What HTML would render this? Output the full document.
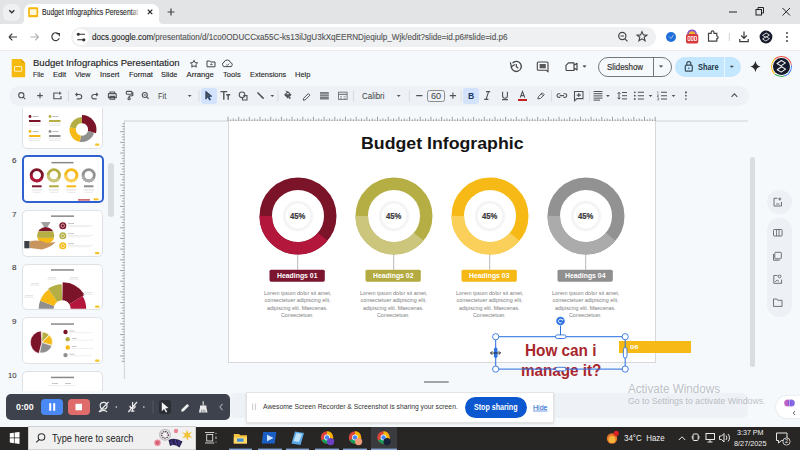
<!DOCTYPE html>
<html><head><meta charset="utf-8">
<style>
*{margin:0;padding:0;box-sizing:border-box}
html,body{width:800px;height:450px;overflow:hidden;background:#f6f9fc;font-family:"Liberation Sans",sans-serif;position:relative}
.a{position:absolute}
svg{position:absolute;overflow:visible}
.t{position:absolute;white-space:pre;line-height:1;transform-origin:0 0}
</style></head><body>

<div class="a" style="left:0;top:0;width:800px;height:24px;background:#e3e4e6"></div>
<div class="a" style="left:3px;top:3.5px;width:17px;height:17px;border-radius:6px;background:#eef0f2"></div>
<div class="a" style="left:24px;top:4px;width:135px;height:21px;background:#fff;border-radius:7px 7px 0 0"></div>
<svg style="left:0;top:0" width="800" height="24">
  <path d="M20 24 Q24 24 24 20 V24 Z" fill="#fff"/>
  <path d="M163 24 Q159 24 159 20 V24 Z" fill="#fff"/>
  <path d="M9.3 10.3 L11.8 12.8 L14.3 10.3" stroke="#333" stroke-width="1.4" fill="none"/>
  <rect x="28.2" y="7.2" width="10" height="10" rx="1.2" fill="#f5b70d"/>
  <rect x="29.9" y="9.3" width="6.6" height="5.8" rx="0.5" fill="#fff8dc"/>
  <path d="M147.8 9.7 L152.3 14.2 M152.3 9.7 L147.8 14.2" stroke="#222" stroke-width="1.2"/>
  <path d="M171 8.6 V15.4 M167.6 12 H174.4" stroke="#444" stroke-width="1.2"/>
  <path d="M729 12 H737" stroke="#222" stroke-width="1"/>
  <rect x="756" y="9.5" width="5.5" height="5.5" stroke="#222" fill="none" stroke-width="1"/>
  <path d="M758 9.5 V7.5 H763.5 V13 H761.5" stroke="#222" fill="none" stroke-width="1"/>
  <path d="M782.5 8 L790 15.5 M790 8 L782.5 15.5" stroke="#222" stroke-width="1"/>
</svg>
<div class="t" style="left:42.20px;top:7.59px;font-size:8.6px;color:#2a2a2a;transform:scale(0.8010,1.0);-webkit-text-stroke:0.12px #2a2a2a;">Budget Infographics Peresentat</div><div class="a" style="left:131px;top:5px;width:10px;height:15px;background:linear-gradient(90deg,rgba(255,255,255,0),#fff 90%)"></div>
<div class="a" style="left:0;top:24px;width:800px;height:26px;background:#fff"></div>
<div class="a" style="left:0;top:49.5px;width:800px;height:0.8px;background:#e9ebee"></div>
<div class="a" style="left:71px;top:27.3px;width:585px;height:19.3px;border-radius:10px;background:#eef0f2"></div>
<div class="a" style="left:73px;top:29.3px;width:15.5px;height:15.5px;border-radius:8px;background:#fff"></div>
<svg style="left:0;top:24px" width="800" height="26">
  <path d="M9 13 H17 M9 13 L12.3 9.7 M9 13 L12.3 16.3" stroke="#3a3a3a" stroke-width="1.15" fill="none"/>
  <path d="M38.5 13 H30.5 M38.5 13 L35.2 9.7 M38.5 13 L35.2 16.3" stroke="#b0b0b0" stroke-width="1.15" fill="none"/>
  <path d="M58.9 10.4 A3.9 3.9 0 1 0 59.3 14.3" stroke="#3a3a3a" stroke-width="1.15" fill="none"/>
  <path d="M56.6 9.6 L59.4 9.6 L59.4 12.2" stroke="#3a3a3a" stroke-width="1.1" fill="none"/>
  <path d="M77.3 10.3 H85 M77.3 15.8 H85" stroke="#333" stroke-width="1.1"/>
  <circle cx="78.3" cy="10.3" r="1.5" fill="#333"/><circle cx="83.8" cy="15.8" r="1.6" fill="#333"/>
  <circle cx="622.3" cy="12" r="3.6" stroke="#444" stroke-width="1.2" fill="none"/>
  <path d="M620.5 12 H624 M625 14.8 L627.5 17.3" stroke="#444" stroke-width="1.2"/>
  <path d="M642 7.6 L643.4 10.9 L646.9 11.1 L644.2 13.3 L645.1 16.8 L642 14.9 L638.9 16.8 L639.8 13.3 L637.1 11.1 L640.6 10.9 Z" stroke="#444" stroke-width="1.1" fill="none"/>
  <circle cx="671" cy="13" r="5" fill="#1e6fd9"/>
  <path d="M669 12.5 L671 14.5 L673.5 11" stroke="#bcd" stroke-width="0.9" fill="none"/>
  <path d="M687 10.5 Q687.5 5.5 692 5.5 Q696.5 5.5 697 10.5 Z" fill="#8a55c8"/>
  <path d="M688.5 10.5 Q689 7.2 692 7.2 Q695 7.2 695.5 10.5 Z" fill="#f0b030"/>
  <rect x="686" y="10" width="12.3" height="9.5" rx="1.8" fill="#d83b3b"/>
  <path d="M688 12.5 H690 V16.5 H688 Z M691.2 12.5 H693.2 V16.5 H691.2 Z M694.4 12.5 H696.4 V16.5 H694.4 Z" fill="none" stroke="#fff" stroke-width="0.8"/>
  <path d="M708.5 9.3 H711.2 V8.2 A1.4 1.4 0 0 1 714 8.2 V9.3 H716.8 V12 A1.3 1.3 0 0 1 716.8 14.6 V17.2 H708.5 Z" stroke="#444" stroke-width="1.2" fill="none"/>
  <path d="M729.3 9 V17" stroke="#d4d4d4" stroke-width="1"/>
  <path d="M744 7.6 V14.2 M741.2 11.5 L744 14.3 L746.8 11.5 M739.8 15 V17.6 H748.2 V15" stroke="#3a3a3a" stroke-width="1.2" fill="none"/>
  <circle cx="766" cy="13" r="6.4" fill="#161c2c"/>
  <path d="M762.6 11.4 L766.2 9 L769.4 11 L765.8 13.4 Z M762.6 15 L766.2 12.6 L769.4 14.6 L765.8 17 Z" stroke="#e8e8e8" stroke-width="0.9" fill="none" stroke-linejoin="round"/>
  <circle cx="787" cy="9" r="0.95" fill="#3a3a3a"/><circle cx="787" cy="13" r="0.95" fill="#3a3a3a"/><circle cx="787" cy="17" r="0.95" fill="#3a3a3a"/>
</svg>
<div class="t" style="left:92.00px;top:33.27px;font-size:8.5px;color:#1f1f1f;transform:scale(0.9539,1.0);-webkit-text-stroke:0.1px #1f1f1f;">docs.google.com</div><div class="t" style="left:153.30px;top:33.27px;font-size:8.5px;color:#555;transform:scale(0.9519,1.0);-webkit-text-stroke:0.12px #555;">/presentation/d/1co0ODUCCxa55C-ks13ilJgU3kXqEERNDjeqiulp_Wjk/edit?slide=id.p6#slide=id.p6</div>
<svg style="left:0;top:50px" width="800" height="36">
  <path d="M11.7 9.8 Q11.7 9 12.5 9 H21.3 L25.2 12.9 V26.4 Q25.2 27.2 24.4 27.2 H12.5 Q11.7 27.2 11.7 26.4 Z" fill="#f6b90d"/>
  <path d="M21.3 9 V12.9 H25.2 Z" fill="#e2a205"/>
  <rect x="14.5" y="16.5" width="7.2" height="4.8" rx="0.6" fill="none" stroke="#fff0b8" stroke-width="1.1"/>
  <path d="M194 10.3 L195.1 12.6 L197.6 12.9 L195.8 14.6 L196.3 17.1 L194 15.9 L191.7 17.1 L192.2 14.6 L190.4 12.9 L192.9 12.6 Z" stroke="#444" stroke-width="1" fill="none"/>
  <path d="M207 11 H209.8 L210.8 12 H215 V16.8 H207 Z" stroke="#444" stroke-width="1" fill="none"/>
  <path d="M210 14.4 H212.2 M211.3 13.4 L212.3 14.4 L211.3 15.4" stroke="#444" stroke-width="0.7" fill="none"/>
  <path d="M224.2 16.6 A2.3 2.3 0 0 1 224 12.2 A3.4 3.4 0 0 1 230.5 12.6 A2.1 2.1 0 0 1 231 16.6 Z" stroke="#444" stroke-width="1" fill="none"/>
  <path d="M226.2 14.6 L227.3 15.6 L229.2 13.6" stroke="#444" stroke-width="0.8" fill="none"/>
</svg>
<div class="t" style="left:32.50px;top:58.09px;font-size:9.9px;color:#1f1f1f;transform:scale(0.9677,1.0);-webkit-text-stroke:0.15px #1f1f1f;">Budget Infographics Peresentation</div><div class="t" style="left:32.90px;top:71.16px;font-size:7.7px;color:#1f1f1f;transform:scale(0.8785,1.0);-webkit-text-stroke:0.12px #1f1f1f;">File</div><div class="t" style="left:53.10px;top:71.16px;font-size:7.7px;color:#1f1f1f;transform:scale(0.9948,1.0);-webkit-text-stroke:0.12px #1f1f1f;">Edit</div><div class="t" style="left:75.30px;top:71.16px;font-size:7.7px;color:#1f1f1f;transform:scale(0.9304,1.0);-webkit-text-stroke:0.12px #1f1f1f;">View</div><div class="t" style="left:99.70px;top:71.16px;font-size:7.7px;color:#1f1f1f;transform:scale(1.0125,1.0);-webkit-text-stroke:0.12px #1f1f1f;">Insert</div><div class="t" style="left:128.60px;top:71.16px;font-size:7.7px;color:#1f1f1f;transform:scale(0.9842,1.0);-webkit-text-stroke:0.12px #1f1f1f;">Format</div><div class="t" style="left:161.00px;top:71.16px;font-size:7.7px;color:#1f1f1f;transform:scale(0.9636,1.0);-webkit-text-stroke:0.12px #1f1f1f;">Slide</div><div class="t" style="left:186.50px;top:71.16px;font-size:7.7px;color:#1f1f1f;-webkit-text-stroke:0.12px #1f1f1f;">Arrange</div><div class="t" style="left:223.00px;top:71.16px;font-size:7.7px;color:#1f1f1f;transform:scale(0.9847,1.0);-webkit-text-stroke:0.12px #1f1f1f;">Tools</div><div class="t" style="left:249.70px;top:71.16px;font-size:7.7px;color:#1f1f1f;transform:scale(0.9637,1.0);-webkit-text-stroke:0.12px #1f1f1f;">Extensions</div><div class="t" style="left:294.80px;top:71.16px;font-size:7.7px;color:#1f1f1f;transform:scale(0.9787,1.0);-webkit-text-stroke:0.12px #1f1f1f;">Help</div>
<div class="a" style="left:598px;top:56.5px;width:73.5px;height:20.5px;border:1px solid #747775;border-radius:11px"></div>
<div class="a" style="left:652.5px;top:57px;width:0.8px;height:19.5px;background:#747775"></div>
<div class="a" style="left:675.2px;top:56.6px;width:65.5px;height:20.6px;background:#c2e7ff;border-radius:11px"></div>
<div class="a" style="left:723.5px;top:57px;width:0.7px;height:19.5px;background:#eaf6ff"></div>
<div class="a" style="left:770.8px;top:56.1px;width:21px;height:21px;border-radius:50%;background:conic-gradient(#ea4335 0 22%,#4285f4 22% 45%,#34a853 45% 62%,#fbbc04 62% 88%,#ea4335 88%)"></div>
<div class="a" style="left:771.9px;top:57.2px;width:18.8px;height:18.8px;border-radius:50%;background:#fff"></div>
<div class="a" style="left:773px;top:58.3px;width:16.6px;height:16.6px;border-radius:50%;background:#121a2c"></div>
<svg style="left:0;top:50px" width="800" height="36">
  <!-- history -->
  <path d="M511.3 16.6 A5 5 0 1 0 512.5 13.2" stroke="#444" stroke-width="1.3" fill="none"/>
  <path d="M510.4 12.3 L511.3 16.8 L514.8 14.5" stroke="#444" stroke-width="1.2" fill="none"/>
  <path d="M516.3 14 V16.8 L518.3 18.2" stroke="#444" stroke-width="1.2" fill="none"/>
  <!-- comment -->
  <path d="M538.3 12 H547 Q548 12 548 13 V21.6 L546.2 20.3 H538.3 Q537.3 20.3 537.3 19.3 V13 Q537.3 12 538.3 12 Z" stroke="#444" stroke-width="1.1" fill="none"/>
  <rect x="539.6" y="14" width="6.2" height="4.3" fill="#5a5a5a"/>
  <!-- camera -->
  <path d="M568.5 12.8 H574 V20.5 H567 Q566 20.5 566 19.5 V15.3 Z M574 15.2 L577 13.3 V20 L574 18.1" stroke="#444" stroke-width="1.15" fill="none" stroke-linejoin="round"/>
  <path d="M583 15.8 L584.5 17.3 L586 15.8 Z" fill="#444" stroke="#444" stroke-width="0.6"/>
  <path d="M659.5 15.8 L661 17.3 L662.5 15.8 Z" fill="#444" stroke="#444" stroke-width="0.6"/>
  <path d="M730.3 16 L731.8 17.5 L733.3 16 Z" fill="#444" stroke="#444" stroke-width="0.6"/>
  <!-- lock -->
  <rect x="685.3" y="15.2" width="7" height="6" rx="1" stroke="#3c4a57" stroke-width="1.2" fill="none"/>
  <path d="M686.8 15.2 V13.6 A2 2 0 0 1 690.8 13.6 V15.2" stroke="#3c4a57" stroke-width="1.2" fill="none"/>
  <circle cx="688.8" cy="18.2" r="0.7" fill="#3c4a57"/>
  <!-- gemini -->
  <path d="M755.4 10.7 Q756.2 15.7 760.6 16.5 Q756.2 17.3 755.4 22.3 Q754.6 17.3 750.2 16.5 Q754.6 15.7 755.4 10.7 Z" fill="#2b2b2b"/>
</svg>
<svg style="left:0;top:50px" width="800" height="36">
  <path d="M777 13.5 L781.4 10.5 L785.4 12.9 L781 15.9 Z M777.2 19.7 L781.6 16.7 L785.6 19.1 L781.2 22.1 Z" stroke="#f0f0f0" stroke-width="1.1" fill="none" stroke-linejoin="round"/>
</svg>
<div class="t" style="left:607.40px;top:62.82px;font-size:8.8px;color:#333;transform:scale(0.9000,1.0);-webkit-text-stroke:0.18px #333;">Slideshow</div><div class="t" style="left:698.00px;top:62.92px;font-size:8.8px;color:#1d3444;font-weight:bold;transform:scale(0.8382,1.0);">Share</div>
<div class="a" style="left:8.5px;top:85.8px;width:740px;height:20px;border-radius:10px;background:#eef1f6"></div>
<div class="a" style="left:201.3px;top:88px;width:16px;height:15.7px;border-radius:3px;background:#d3e3fd"></div>
<div class="a" style="left:463.4px;top:88px;width:15.4px;height:16px;border-radius:3px;background:#d3e3fd"></div>
<div class="a" style="left:426.6px;top:89.6px;width:18.1px;height:12.2px;border:0.8px solid #8a8c8e;border-radius:2.5px"></div>
<svg style="left:0;top:86px" width="800" height="20">
 <g stroke="#505356" fill="none" stroke-width="1.1">
  <!-- search -->
  <circle cx="21.3" cy="9.2" r="2.6" /><path d="M23.2 11.1 L25.2 13.1"/>
  <!-- plus -->
  <path d="M40 6.8 V12.4 M37.2 9.6 H42.8"/>
  <!-- new slide -->
  <path d="M58 7 H53.8 V12.8 H61 V10"/><path d="M59.8 5.6 V8.8 M58.2 7.2 H61.4" stroke-width="1"/>
  <!-- undo redo -->
  <path d="M76 8.5 H79.5 A2.2 2.2 0 0 1 79.5 12.9 H76.8 M77.3 6.8 L75.8 8.5 L77.3 10.1"/>
  <path d="M97.5 8.5 H94 A2.2 2.2 0 0 0 94 12.9 H96.7 M96.2 6.8 L97.7 8.5 L96.2 10.1"/>
  <!-- print -->
  <path d="M110 7.6 V6 H114.6 V7.6 M109 7.6 H115.6 Q116.2 7.6 116.2 8.2 V11.6 H108.4 V8.2 Q108.4 7.6 109 7.6 Z M110 10.4 H114.6 V13.2 H110 Z"/>
  <!-- paint format -->
  <path d="M126.3 6.2 Q126.3 5.4 127.1 5.4 H131.1 Q131.9 5.4 131.9 6.2 V7.4 Q131.9 8.2 131.1 8.2 H127.1 Q126.3 8.2 126.3 7.4 Z M131.9 6.8 H132.8 V9.6 L129.1 10.2 V11.4"/><circle cx="129.1" cy="12.7" r="1.1"/>
  <!-- zoom -->
  <circle cx="144.8" cy="9" r="2.5"/><path d="M143.7 9 H145.9 M146.7 10.9 L148.6 12.8"/>
  <!-- line -->
  <path d="M257.5 6.5 L263.6 12.6" stroke-width="1.6"/>
  <!-- shape -->
  <circle cx="242" cy="8.8" r="2.8"/><path d="M243.3 9.6 H247 V14 H242.5 V11.5"/>
  <!-- fill -->
  <path d="M284.8 8.8 L287.8 5.8 L290.8 8.8 L287.8 11.8 Z M285.2 8.8 H290.4" stroke-width="1.1"/><path d="M285 8.9 L287.8 11.6 L290.6 8.9 Z" fill="#505356" stroke="none"/><path d="M286 4.8 L287.3 6.2" stroke-width="1"/>
  <!-- pen -->
  <path d="M303.6 12.3 L308.3 7.6 L309.9 9.2 L305.2 13.9 L303.3 14.2 Z" stroke-width="1"/>

 </g>
 <g fill="#505356">
  <path d="M187.8 9 L191.6 9 L189.7 11 Z"/>
  <path d="M270.4 9 L274.2 9 L272.3 11 Z"/>
  <path d="M396.8 9 L400.6 9 L398.7 11 Z"/>
  <path d="M606 9 L609.8 9 L607.9 11 Z"/>
  <path d="M648.6 9 L652.4 9 L650.5 11 Z"/>
  <path d="M671.6 9 L675.4 9 L673.5 11 Z"/>
  <circle cx="289.8" cy="12" r="0.9"/>
  <rect x="320" y="6" width="8.8" height="7.5" fill="#7a7c7f"/>
  <path d="M320 8.2 H328.8 M320 10.4 H328.8" stroke="#eef2f8" stroke-width="0.5"/>
  <rect x="338.5" y="6.2" width="8.6" height="7.2" fill="none" stroke="#7a7c7f" stroke-width="1"/>
  <path d="M338.5 8.4 H347.1" stroke="#7a7c7f" stroke-width="1.2"/>
  <path d="M340 10.7 H342 M343.6 10.7 H345.6 M340 12.4 H342 M343.6 12.4 H345.6" stroke="#7a7c7f" stroke-width="0.7"/>
  <path d="M685.9 6.4 V6.4" stroke="#505356" stroke-width="1.6" stroke-linecap="round"/>
  <circle cx="685.9" cy="6.4" r="0.85"/><circle cx="685.9" cy="9.7" r="0.85"/><circle cx="685.9" cy="13" r="0.85"/>
 </g>
 <g stroke="#d8dce2" stroke-width="1"><path d="M68.5 4.5 V15.5 M198.9 4.5 V15.5 M277.9 4.5 V15.5 M353.5 4.5 V15.5 M409.4 4.5 V15.5 M461 4.5 V15.5 M551.6 4.5 V15.5 M589.7 4.5 V15.5"/></g>
 <g stroke="#505356" fill="none" stroke-width="1.1">
  <!-- cursor -->
  <path d="M205.8 5.3 L211.8 10.2 L208.8 10.6 L210.6 13.6 L209.6 14.1 L207.8 11.1 L205.8 13.2 Z" fill="#505356" stroke-width="0.8" stroke="#1e3a6b"/>
  <!-- Tt -->
  <path d="M220.5 5.6 H227.2 M223.8 5.6 V13.8 M226.2 8.8 H230.2 M228.2 8.8 V13.8" stroke-width="1.4"/>
  <!-- minus plus -->
  <path d="M416.2 9.6 H422.4 M449.8 9.6 H456 M452.9 6.5 V12.7"/>
  <!-- I -->
  <path d="M486 5.6 H490.2 M484.2 13.4 H488.4 M488.6 5.6 L486.1 13.4" stroke-width="1.1"/>
  <!-- U -->
  <path d="M502.6 5.8 V9.8 A2.4 2.4 0 0 0 507.4 9.8 V5.8 M502 13.6 H508" stroke-width="1.1"/>
  <!-- A -->
  <path d="M520.2 11.6 L522.5 5.6 L524.8 11.6 M521 9.6 H524" stroke-width="1.1"/>
  <!-- highlighter -->
  <path d="M537.8 12.8 L538.5 10.6 L542.3 6.8 L544.2 8.7 L540.4 12.5 Z M541.3 7.8 L543.2 9.7" stroke-width="1"/>
  <!-- link -->
  <path d="M560.3 7.8 H558.8 A1.8 1.8 0 0 0 558.8 11.4 H560.3 M563.5 7.8 H565 A1.8 1.8 0 0 1 565 11.4 H563.5 M559.8 9.6 H564" stroke-width="1.1"/>
  <!-- comment add -->
  <path d="M574.5 5.5 H583 V12.6 H577 L574.5 14.8 Z M578.8 7 V11.1 M576.7 9.1 H580.9" stroke-width="1.1"/>
  <!-- align -->
  <path d="M593.5 5.5 H602.5 M593.5 7.7 H602.5 M593.5 9.9 H602.5 M593.5 12.1 H602.5 M593.5 14.1 H600" stroke-width="1"/>
  <!-- line spacing -->
  <path d="M619 6.5 V13 M617.5 7.8 L619 6.3 L620.5 7.8 M617.5 11.7 L619 13.2 L620.5 11.7 M622 6.5 H627 M622 9.7 H627 M622 12.9 H627" stroke-width="1"/>
  <!-- bullet -->
  <path d="M637.8 6.3 H644 M637.8 9.7 H644 M637.8 13 H644" stroke-width="1.1"/>
  <!-- numbered -->
  <path d="M661 6.3 H667 M661 9.7 H667 M661 13 H667" stroke-width="1.1"/>
  <!-- chevron up -->
  <path d="M731.5 10.8 L734.4 7.9 L737.3 10.8" stroke-width="1.1"/>
 </g>
 <g fill="#505356"><circle cx="634.8" cy="6.3" r="0.9"/><circle cx="634.8" cy="9.7" r="0.9"/><circle cx="634.8" cy="13" r="0.9"/>
 <path d="M657.8 5.3 V7.4 M657.2 8.8 H658.7 L657.2 10.5 H658.8 M657.3 12 H658.7 V14 H657.3" stroke="#505356" stroke-width="0.6" fill="none"/></g>
</svg>
<div class="t" style="left:158.00px;top:92.16px;font-size:8.4px;color:#444;transform:scale(0.9001,1.0);">Fit</div><div class="t" style="left:362.00px;top:92.42px;font-size:8.8px;color:#3c3c3c;transform:scale(0.9022,1.0);">Calibri</div><div class="t" style="left:430.60px;top:92.29px;font-size:8.6px;color:#444;transform:scale(1.0663,1.0);">60</div><div class="t" style="left:468.00px;top:92.15px;font-size:9.0px;color:#1f3a64;font-weight:bold;transform:scale(0.9539,1.0);">B</div><div class="a" style="left:518px;top:99.2px;width:9px;height:1.7px;background:#c5221f"></div>
<svg style="left:0;top:0" width="800" height="450">
 <path d="M124 121 H748 M124.4 121 V379" stroke="#c8cacd" stroke-width="0.8" fill="none"/>
 <path d="M228.00 121 V116.80 M230.67 121 V119.30 M233.34 121 V118.40 M236.01 121 V119.30 M238.68 121 V116.80 M241.35 121 V119.30 M244.02 121 V118.40 M246.69 121 V119.30 M249.36 121 V116.80 M252.03 121 V119.30 M254.70 121 V118.40 M257.37 121 V119.30 M260.04 121 V116.80 M262.71 121 V119.30 M265.38 121 V118.40 M268.05 121 V119.30 M270.72 121 V116.80 M273.39 121 V119.30 M276.06 121 V118.40 M278.73 121 V119.30 M281.40 121 V116.80 M284.07 121 V119.30 M286.74 121 V118.40 M289.41 121 V119.30 M292.08 121 V116.80 M294.75 121 V119.30 M297.42 121 V118.40 M300.09 121 V119.30 M302.76 121 V116.80 M305.43 121 V119.30 M308.10 121 V118.40 M310.77 121 V119.30 M313.44 121 V116.80 M316.11 121 V119.30 M318.78 121 V118.40 M321.45 121 V119.30 M324.12 121 V116.80 M326.79 121 V119.30 M329.46 121 V118.40 M332.13 121 V119.30 M334.80 121 V116.80 M337.47 121 V119.30 M340.14 121 V118.40 M342.81 121 V119.30 M345.48 121 V116.80 M348.15 121 V119.30 M350.82 121 V118.40 M353.49 121 V119.30 M356.16 121 V116.80 M358.83 121 V119.30 M361.50 121 V118.40 M364.17 121 V119.30 M366.84 121 V116.80 M369.51 121 V119.30 M372.18 121 V118.40 M374.85 121 V119.30 M377.52 121 V116.80 M380.19 121 V119.30 M382.86 121 V118.40 M385.53 121 V119.30 M388.20 121 V116.80 M390.87 121 V119.30 M393.54 121 V118.40 M396.21 121 V119.30 M398.88 121 V116.80 M401.55 121 V119.30 M404.22 121 V118.40 M406.89 121 V119.30 M409.56 121 V116.80 M412.23 121 V119.30 M414.90 121 V118.40 M417.57 121 V119.30 M420.24 121 V116.80 M422.91 121 V119.30 M425.58 121 V118.40 M428.25 121 V119.30 M430.92 121 V116.80 M433.59 121 V119.30 M436.26 121 V118.40 M438.93 121 V119.30 M441.60 121 V116.80 M444.27 121 V119.30 M446.94 121 V118.40 M449.61 121 V119.30 M452.28 121 V116.80 M454.95 121 V119.30 M457.62 121 V118.40 M460.29 121 V119.30 M462.96 121 V116.80 M465.63 121 V119.30 M468.30 121 V118.40 M470.97 121 V119.30 M473.64 121 V116.80 M476.31 121 V119.30 M478.98 121 V118.40 M481.65 121 V119.30 M484.32 121 V116.80 M486.99 121 V119.30 M489.66 121 V118.40 M492.33 121 V119.30 M495.00 121 V116.80 M497.67 121 V119.30 M500.34 121 V118.40 M503.01 121 V119.30 M505.68 121 V116.80 M508.35 121 V119.30 M511.02 121 V118.40 M513.69 121 V119.30 M516.36 121 V116.80 M519.03 121 V119.30 M521.70 121 V118.40 M524.37 121 V119.30 M527.04 121 V116.80 M529.71 121 V119.30 M532.38 121 V118.40 M535.05 121 V119.30 M537.72 121 V116.80 M540.39 121 V119.30 M543.06 121 V118.40 M545.73 121 V119.30 M548.40 121 V116.80 M551.07 121 V119.30 M553.74 121 V118.40 M556.41 121 V119.30 M559.08 121 V116.80 M561.75 121 V119.30 M564.42 121 V118.40 M567.09 121 V119.30 M569.76 121 V116.80 M572.43 121 V119.30 M575.10 121 V118.40 M577.77 121 V119.30 M580.44 121 V116.80 M583.11 121 V119.30 M585.78 121 V118.40 M588.45 121 V119.30 M591.12 121 V116.80 M593.79 121 V119.30 M596.46 121 V118.40 M599.13 121 V119.30 M601.80 121 V116.80 M604.47 121 V119.30 M607.14 121 V118.40 M609.81 121 V119.30 M612.48 121 V116.80 M615.15 121 V119.30 M617.82 121 V118.40 M620.49 121 V119.30 M623.16 121 V116.80 M625.83 121 V119.30 M628.50 121 V118.40 M631.17 121 V119.30 M633.84 121 V116.80 M636.51 121 V119.30 M639.18 121 V118.40 M641.85 121 V119.30 M644.52 121 V116.80 M647.19 121 V119.30 M649.86 121 V118.40 M652.53 121 V119.30 M655.20 121 V116.80 M124.4 123.67 H122.70 M124.4 126.34 H121.80 M124.4 129.01 H122.70 M124.4 131.68 H120.20 M124.4 134.35 H122.70 M124.4 137.02 H121.80 M124.4 139.69 H122.70 M124.4 142.36 H120.20 M124.4 145.03 H122.70 M124.4 147.70 H121.80 M124.4 150.37 H122.70 M124.4 153.04 H120.20 M124.4 155.71 H122.70 M124.4 158.38 H121.80 M124.4 161.05 H122.70 M124.4 163.72 H120.20 M124.4 166.39 H122.70 M124.4 169.06 H121.80 M124.4 171.73 H122.70 M124.4 174.40 H120.20 M124.4 177.07 H122.70 M124.4 179.74 H121.80 M124.4 182.41 H122.70 M124.4 185.08 H120.20 M124.4 187.75 H122.70 M124.4 190.42 H121.80 M124.4 193.09 H122.70 M124.4 195.76 H120.20 M124.4 198.43 H122.70 M124.4 201.10 H121.80 M124.4 203.77 H122.70 M124.4 206.44 H120.20 M124.4 209.11 H122.70 M124.4 211.78 H121.80 M124.4 214.45 H122.70 M124.4 217.12 H120.20 M124.4 219.79 H122.70 M124.4 222.46 H121.80 M124.4 225.13 H122.70 M124.4 227.80 H120.20 M124.4 230.47 H122.70 M124.4 233.14 H121.80 M124.4 235.81 H122.70 M124.4 238.48 H120.20 M124.4 241.15 H122.70 M124.4 243.82 H121.80 M124.4 246.49 H122.70 M124.4 249.16 H120.20 M124.4 251.83 H122.70 M124.4 254.50 H121.80 M124.4 257.17 H122.70 M124.4 259.84 H120.20 M124.4 262.51 H122.70 M124.4 265.18 H121.80 M124.4 267.85 H122.70 M124.4 270.52 H120.20 M124.4 273.19 H122.70 M124.4 275.86 H121.80 M124.4 278.53 H122.70 M124.4 281.20 H120.20 M124.4 283.87 H122.70 M124.4 286.54 H121.80 M124.4 289.21 H122.70 M124.4 291.88 H120.20 M124.4 294.55 H122.70 M124.4 297.22 H121.80 M124.4 299.89 H122.70 M124.4 302.56 H120.20 M124.4 305.23 H122.70 M124.4 307.90 H121.80 M124.4 310.57 H122.70 M124.4 313.24 H120.20 M124.4 315.91 H122.70 M124.4 318.58 H121.80 M124.4 321.25 H122.70 M124.4 323.92 H120.20 M124.4 326.59 H122.70 M124.4 329.26 H121.80 M124.4 331.93 H122.70 M124.4 334.60 H120.20 M124.4 337.27 H122.70 M124.4 339.94 H121.80 M124.4 342.61 H122.70 M124.4 345.28 H120.20 M124.4 347.95 H122.70 M124.4 350.62 H121.80 M124.4 353.29 H122.70 M124.4 355.96 H120.20 M124.4 358.63 H122.70 M124.4 361.30 H121.80" stroke="#7d7f82" stroke-width="0.75" fill="none"/>
</svg>
<div class="a" style="left:228px;top:121px;width:427.5px;height:241.5px;background:#fff;border:0.8px solid #d6d8db;border-top:none"></div><div class="t" style="left:360.65px;top:134.88px;font-size:17.2px;color:#141414;font-weight:bold;transform:scale(1.0320,1.0);">Budget Infographic</div><svg style="left:0;top:0" width="800" height="450"><defs><radialGradient id="ish"><stop offset="0.62" stop-color="#fff" stop-opacity="0"/><stop offset="0.8" stop-color="#f0f0f0"/><stop offset="1" stop-color="#fff" stop-opacity="0"/></radialGradient></defs><circle cx="298" cy="216" r="32.25" fill="none" stroke="#7b1428" stroke-width="12.5"/>
<circle cx="298" cy="216" r="32.25" fill="none" stroke="#b3173c" stroke-width="12.5" stroke-dasharray="78.80 202.63" transform="rotate(40 298 216)"/>
<circle cx="298" cy="216" r="17" fill="url(#ish)"/>
<path d="M297.7 254.5 V269.7" stroke="#9a9a9a" stroke-width="0.7"/>
<rect x="269.5" y="269.7" width="55.3" height="12" rx="1.6" fill="#7b1530"/>
<circle cx="394" cy="216" r="32.25" fill="none" stroke="#b5ae45" stroke-width="12.5"/>
<circle cx="394" cy="216" r="32.25" fill="none" stroke="#ccc67d" stroke-width="12.5" stroke-dasharray="78.80 202.63" transform="rotate(40 394 216)"/>
<circle cx="394" cy="216" r="17" fill="url(#ish)"/>
<path d="M393.7 254.5 V269.7" stroke="#9a9a9a" stroke-width="0.7"/>
<rect x="365.5" y="269.7" width="55.3" height="12" rx="1.6" fill="#b3ab42"/>
<circle cx="490" cy="216" r="32.25" fill="none" stroke="#f6b915" stroke-width="12.5"/>
<circle cx="490" cy="216" r="32.25" fill="none" stroke="#fbd05a" stroke-width="12.5" stroke-dasharray="78.80 202.63" transform="rotate(40 490 216)"/>
<circle cx="490" cy="216" r="17" fill="url(#ish)"/>
<path d="M489.7 254.5 V269.7" stroke="#9a9a9a" stroke-width="0.7"/>
<rect x="461.5" y="269.7" width="55.3" height="12" rx="1.6" fill="#f5b815"/>
<circle cx="586" cy="216" r="32.25" fill="none" stroke="#929292" stroke-width="12.5"/>
<circle cx="586" cy="216" r="32.25" fill="none" stroke="#ababab" stroke-width="12.5" stroke-dasharray="78.80 202.63" transform="rotate(40 586 216)"/>
<circle cx="586" cy="216" r="17" fill="url(#ish)"/>
<path d="M585.7 254.5 V269.7" stroke="#9a9a9a" stroke-width="0.7"/>
<rect x="557.5" y="269.7" width="55.3" height="12" rx="1.6" fill="#8f8f8f"/></svg><div class="t" style="left:290.35px;top:212.25px;font-size:8.3px;color:#3a3a3a;font-weight:bold;transform:scale(0.9210,1.0);-webkit-text-stroke:0.2px #3a3a3a;">45%</div><div class="t" style="left:277.25px;top:272.59px;font-size:6.6px;color:#ffffff;font-weight:bold;transform:scale(1.0416,1.0);">Headings 01</div><div class="t" style="left:263.95px;top:291.01px;font-size:5.4px;color:#808080;transform:scale(1.0131,1.0);">Lorem ipsum dolor sit amet,</div><div class="t" style="left:264.45px;top:298.41px;font-size:5.4px;color:#808080;">consectetuer adipiscing elit,</div><div class="t" style="left:267.35px;top:305.81px;font-size:5.4px;color:#808080;transform:scale(0.9817,1.0);">adipiscing elit. Maecenas.</div><div class="t" style="left:281.40px;top:313.01px;font-size:5.4px;color:#808080;transform:scale(0.9784,1.0);">Consectetuer.</div><div class="t" style="left:386.35px;top:212.25px;font-size:8.3px;color:#3a3a3a;font-weight:bold;transform:scale(0.9210,1.0);-webkit-text-stroke:0.2px #3a3a3a;">45%</div><div class="t" style="left:373.25px;top:272.59px;font-size:6.6px;color:#ffffff;font-weight:bold;transform:scale(1.0416,1.0);">Headings 02</div><div class="t" style="left:359.95px;top:291.01px;font-size:5.4px;color:#808080;transform:scale(1.0131,1.0);">Lorem ipsum dolor sit amet,</div><div class="t" style="left:360.45px;top:298.41px;font-size:5.4px;color:#808080;">consectetuer adipiscing elit,</div><div class="t" style="left:363.35px;top:305.81px;font-size:5.4px;color:#808080;transform:scale(0.9817,1.0);">adipiscing elit. Maecenas.</div><div class="t" style="left:377.40px;top:313.01px;font-size:5.4px;color:#808080;transform:scale(0.9784,1.0);">Consectetuer.</div><div class="t" style="left:482.35px;top:212.25px;font-size:8.3px;color:#3a3a3a;font-weight:bold;transform:scale(0.9210,1.0);-webkit-text-stroke:0.2px #3a3a3a;">45%</div><div class="t" style="left:469.25px;top:272.59px;font-size:6.6px;color:#ffffff;font-weight:bold;transform:scale(1.0416,1.0);">Headings 03</div><div class="t" style="left:455.95px;top:291.01px;font-size:5.4px;color:#808080;transform:scale(1.0131,1.0);">Lorem ipsum dolor sit amet,</div><div class="t" style="left:456.45px;top:298.41px;font-size:5.4px;color:#808080;">consectetuer adipiscing elit,</div><div class="t" style="left:459.35px;top:305.81px;font-size:5.4px;color:#808080;transform:scale(0.9817,1.0);">adipiscing elit. Maecenas.</div><div class="t" style="left:473.40px;top:313.01px;font-size:5.4px;color:#808080;transform:scale(0.9784,1.0);">Consectetuer.</div><div class="t" style="left:578.35px;top:212.25px;font-size:8.3px;color:#3a3a3a;font-weight:bold;transform:scale(0.9210,1.0);-webkit-text-stroke:0.2px #3a3a3a;">45%</div><div class="t" style="left:565.25px;top:272.59px;font-size:6.6px;color:#ffffff;font-weight:bold;transform:scale(1.0416,1.0);">Headings 04</div><div class="t" style="left:551.95px;top:291.01px;font-size:5.4px;color:#808080;transform:scale(1.0131,1.0);">Lorem ipsum dolor sit amet,</div><div class="t" style="left:552.45px;top:298.41px;font-size:5.4px;color:#808080;">consectetuer adipiscing elit,</div><div class="t" style="left:555.35px;top:305.81px;font-size:5.4px;color:#808080;transform:scale(0.9817,1.0);">adipiscing elit. Maecenas.</div><div class="t" style="left:569.40px;top:313.01px;font-size:5.4px;color:#808080;transform:scale(0.9784,1.0);">Consectetuer.</div><div class="a" style="left:0;top:0;width:800px;height:378.6px;overflow:hidden"><div class="a" style="left:619px;top:341px;width:71.5px;height:11.6px;background:#f6b915"></div><div class="t" style="left:630.00px;top:344.40px;font-size:6.0px;color:#ffffff;font-weight:bold;transform:scale(1.2736,1.0);">06</div><div class="t" style="left:525.45px;top:341.96px;font-size:16.4px;color:#a8262c;font-weight:bold;transform:scale(0.9341,1.0);">How can i</div><div class="t" style="left:520.75px;top:362.89px;font-size:16.6px;color:#a8262c;font-weight:bold;transform:scale(0.9164,1.0);">manage it?</div>
<svg style="left:0;top:0" width="800" height="450">
 <g stroke="#3072e0" stroke-width="1.05" fill="none">
  <rect x="495.7" y="336.7" width="129.5" height="32.4"/>
  <path d="M560.5 325.5 V336.7"/>
 </g>
 <g stroke="#3072e0" stroke-width="0.9" fill="#fff">
  <circle cx="495.7" cy="336.7" r="3.1"/><circle cx="625.2" cy="336.7" r="3.1"/>
  <circle cx="495.7" cy="369.1" r="3.1"/><circle cx="625.2" cy="369.1" r="3.1"/>
  <rect x="555.5" y="334.9" width="10.5" height="3.6" rx="1.8"/>
  <rect x="555.5" y="367.3" width="10.5" height="3.6" rx="1.8"/>
  <rect x="623.4" y="347.6" width="3.6" height="10.5" rx="1.8"/>
 </g>
 <rect x="493.9" y="347.6" width="3.6" height="10.5" rx="1.8" fill="#3072e0"/>
 <circle cx="560.5" cy="321" r="4.3" fill="#3072e0"/>
 <path d="M562.3 320.2 A2 2 0 1 0 561.6 322.7" stroke="#fff" stroke-width="0.9" fill="none"/>
 <path d="M561.3 319.4 L562.5 320.4 L563.3 319" stroke="#fff" stroke-width="0.7" fill="none"/>
 <path d="M490.5 353 H500.5 M490.5 353 L492.3 351.2 M490.5 353 L492.3 354.8 M500.5 353 L498.7 351.2 M500.5 353 L498.7 354.8" stroke="#222" stroke-width="0.9" fill="none"/>
</svg>
</div>
<svg style="left:0;top:0" width="800" height="450"><path d="M424 382 H448.7" stroke="#8e8e8e" stroke-width="1.6"/></svg>
<div class="a" style="left:0;top:107.5px;width:118px;height:283px;overflow:hidden"><div class="a" style="left:22.4px;top:-5.099999999999994px;width:80.4px;height:46.5px;border:0.8px solid #dfe1e4;border-radius:5px;background:#fff"></div><svg style="left:0;top:0" width="118" height="283"></svg><svg style="left:0;top:0" width="118" height="283"><circle cx="30" cy="8.5" r="1.4" fill="#7b1428"/><rect x="32.5" y="8.0" width="6" height="1" fill="#bbb"/><rect x="29" y="12.0" width="11.5" height="2" fill="#7b1428"/><rect x="29" y="15.5" width="12" height="0.7" fill="#e2e2e2"/><rect x="29" y="17.1" width="11" height="0.7" fill="#e2e2e2"/><circle cx="50" cy="8.5" r="1.4" fill="#b5ae45"/><rect x="52.5" y="8.0" width="6" height="1" fill="#bbb"/><rect x="49" y="12.0" width="11.5" height="2" fill="#b5ae45"/><rect x="49" y="15.5" width="12" height="0.7" fill="#e2e2e2"/><rect x="49" y="17.1" width="11" height="0.7" fill="#e2e2e2"/><circle cx="30" cy="23.5" r="1.4" fill="#f6b915"/><rect x="32.5" y="23.0" width="6" height="1" fill="#bbb"/><rect x="29" y="27.0" width="11.5" height="2" fill="#f6b915"/><rect x="29" y="30.5" width="12" height="0.7" fill="#e2e2e2"/><rect x="29" y="32.1" width="11" height="0.7" fill="#e2e2e2"/><circle cx="50" cy="23.5" r="1.4" fill="#8f8f8f"/><rect x="52.5" y="23.0" width="6" height="1" fill="#bbb"/><rect x="49" y="27.0" width="11.5" height="2" fill="#8f8f8f"/><rect x="49" y="30.5" width="12" height="0.7" fill="#e2e2e2"/><rect x="49" y="32.1" width="11" height="0.7" fill="#e2e2e2"/><path d="M82.00 7.00 A14.5 14.5 0 0 1 96.01 25.25 L87.99 23.10 A6.2 6.2 0 0 0 82.00 15.30 Z" fill="#7b1428"/><path d="M94.07 24.74 A12.5 12.5 0 0 1 79.83 33.81 L80.92 27.61 A6.2 6.2 0 0 0 87.99 23.10 Z" fill="#8f8f8f"/><path d="M79.83 33.81 A12.5 12.5 0 0 1 69.69 19.33 L75.89 20.42 A6.2 6.2 0 0 0 80.92 27.61 Z" fill="#f6b915"/><path d="M69.69 19.33 A12.5 12.5 0 0 1 82.00 9.00 L82.00 15.30 A6.2 6.2 0 0 0 75.89 20.42 Z" fill="#b5ae45"/><rect x="95" y="35.5" width="4.5" height="2.2" rx="1" fill="#f6c42a"/></svg><div class="a" style="left:21.5px;top:47.599999999999994px;width:82.3px;height:48.3px;border:2px solid #2f62d0;border-radius:5px;background:#fff"></div><svg style="left:0;top:0" width="118" height="283"><rect x="51.5" y="53.900000000000006" width="22" height="1.5" fill="#555" opacity="0.7"/><circle cx="36.8" cy="67.30000000000001" r="5.6" fill="none" stroke="#7b1428" stroke-width="2.8"/><path d="M41.65 70.10000000000001 A5.6 5.6 0 0 1 31.199999999999996 67.30000000000001" fill="none" stroke="#b3173c" stroke-width="2.8"/><rect x="31.999999999999996" y="77.30000000000001" width="9.6" height="2" fill="#7b1530"/><rect x="31.299999999999997" y="81.0" width="11" height="0.7" fill="#e4e4e4"/><rect x="31.799999999999997" y="82.5" width="10" height="0.7" fill="#e4e4e4"/><rect x="32.8" y="84.0" width="8" height="0.7" fill="#e4e4e4"/><circle cx="53.9" cy="67.30000000000001" r="5.6" fill="none" stroke="#b5ae45" stroke-width="2.8"/><path d="M58.75 70.10000000000001 A5.6 5.6 0 0 1 48.3 67.30000000000001" fill="none" stroke="#ccc67d" stroke-width="2.8"/><rect x="49.1" y="77.30000000000001" width="9.6" height="2" fill="#b3ab42"/><rect x="48.4" y="81.0" width="11" height="0.7" fill="#e4e4e4"/><rect x="48.9" y="82.5" width="10" height="0.7" fill="#e4e4e4"/><rect x="49.9" y="84.0" width="8" height="0.7" fill="#e4e4e4"/><circle cx="71.3" cy="67.30000000000001" r="5.6" fill="none" stroke="#f6b915" stroke-width="2.8"/><path d="M76.14999999999999 70.10000000000001 A5.6 5.6 0 0 1 65.7 67.30000000000001" fill="none" stroke="#fbd05a" stroke-width="2.8"/><rect x="66.5" y="77.30000000000001" width="9.6" height="2" fill="#f5b815"/><rect x="65.8" y="81.0" width="11" height="0.7" fill="#e4e4e4"/><rect x="66.3" y="82.5" width="10" height="0.7" fill="#e4e4e4"/><rect x="67.3" y="84.0" width="8" height="0.7" fill="#e4e4e4"/><circle cx="88.7" cy="67.30000000000001" r="5.6" fill="none" stroke="#929292" stroke-width="2.8"/><path d="M93.55 70.10000000000001 A5.6 5.6 0 0 1 83.10000000000001 67.30000000000001" fill="none" stroke="#ababab" stroke-width="2.8"/><rect x="83.9" y="77.30000000000001" width="9.6" height="2" fill="#8f8f8f"/><rect x="83.2" y="81.0" width="11" height="0.7" fill="#e4e4e4"/><rect x="83.7" y="82.5" width="10" height="0.7" fill="#e4e4e4"/><rect x="84.7" y="84.0" width="8" height="0.7" fill="#e4e4e4"/><rect x="78" y="91.1" width="12" height="1.6" fill="#c0393f" opacity="0.8"/><rect x="93.5" y="90.30000000000001" width="5" height="2" fill="#f6c42a"/></svg><div class="a" style="left:22.4px;top:102.5px;width:80.4px;height:46.5px;border:0.8px solid #dfe1e4;border-radius:5px;background:#fff"></div><svg style="left:0;top:0" width="118" height="283"><rect x="51" y="107.4" width="23" height="1.5" fill="#555" opacity="0.7"/><path d="M41 114.0 L50.6 114.0 L47.5 119.0 L44 119.0 Z" fill="#a0a0a0"/><clipPath id="bagc"><ellipse cx="45.7" cy="127.5" rx="8.6" ry="8.6"/></clipPath><g clip-path="url(#bagc)"><rect x="36" y="118.5" width="20" height="4.8" fill="#7b1428"/><rect x="36" y="123.30000000000001" width="20" height="6.6" fill="#b5ae45"/><rect x="36" y="129.9" width="20" height="7" fill="#f6b915"/></g><path d="M29.8 133.5 Q38 131.0 47 135.0 L55.5 134.0 Q52 139.0 42 141.5 L29.8 140.0 Z" fill="#c8955e"/><rect x="24.3" y="133.0" width="5.2" height="7.3" fill="#3b3f46"/><circle cx="62.8" cy="117.69999999999999" r="3.5" fill="#7b1428"/><circle cx="62.8" cy="117.69999999999999" r="1.7" fill="none" stroke="#fff" stroke-width="0.6"/><rect x="68" y="115.19999999999999" width="6" height="0.8" fill="#bbb"/><rect x="68" y="117.1" width="25" height="0.6" fill="#e4e4e4"/><rect x="68" y="118.49999999999999" width="22" height="0.6" fill="#e4e4e4"/><circle cx="62.8" cy="127.80000000000001" r="3.5" fill="#b5ae45"/><circle cx="62.8" cy="127.80000000000001" r="1.7" fill="none" stroke="#fff" stroke-width="0.6"/><rect x="68" y="125.30000000000001" width="6" height="0.8" fill="#bbb"/><rect x="68" y="127.20000000000002" width="25" height="0.6" fill="#e4e4e4"/><rect x="68" y="128.60000000000002" width="22" height="0.6" fill="#e4e4e4"/><circle cx="62.8" cy="137.8" r="3.5" fill="#f6b915"/><circle cx="62.8" cy="137.8" r="1.7" fill="none" stroke="#fff" stroke-width="0.6"/><rect x="68" y="135.3" width="6" height="0.8" fill="#bbb"/><rect x="68" y="137.20000000000002" width="25" height="0.6" fill="#e4e4e4"/><rect x="68" y="138.60000000000002" width="22" height="0.6" fill="#e4e4e4"/><rect x="95" y="144.0" width="4.5" height="2.2" rx="1" fill="#f6c42a"/></svg><div class="a" style="left:22.4px;top:156.2px;width:80.4px;height:46.5px;border:0.8px solid #dfe1e4;border-radius:5px;background:#fff"></div><svg style="left:0;top:0" width="118" height="283"><rect x="51" y="161.2" width="23" height="1.5" fill="#555" opacity="0.7"/><path d="M38.70 200.80 A23.5 23.5 0 0 1 40.12 192.76 L54.21 197.89 A8.5 8.5 0 0 0 53.70 200.80 Z" fill="#8f8f8f"/><path d="M40.12 192.76 A23.5 23.5 0 0 1 48.72 181.55 L57.32 193.84 A8.5 8.5 0 0 0 54.21 197.89 Z" fill="#f6b915"/><path d="M48.15 180.73 A24.5 24.5 0 0 1 61.77 176.30 L62.05 192.30 A8.5 8.5 0 0 0 57.32 193.84 Z" fill="#b5ae45"/><path d="M62.66 174.30 A26.5 26.5 0 0 1 84.67 186.76 L69.41 196.30 A8.5 8.5 0 0 0 62.35 192.30 Z" fill="#7b1428"/><path d="M82.55 188.08 A24 24 0 0 1 86.20 200.80 L70.70 200.80 A8.5 8.5 0 0 0 69.41 196.30 Z" fill="#b3173c"/><rect x="31" y="175.5" width="8" height="0.7" fill="#ccc"/><rect x="30" y="177.0" width="10" height="0.6" fill="#e6e6e6"/><rect x="48" y="169.5" width="8" height="0.7" fill="#ccc"/><rect x="47" y="171.0" width="10" height="0.6" fill="#e6e6e6"/><rect x="70" y="169.5" width="8" height="0.7" fill="#ccc"/><rect x="69" y="171.0" width="10" height="0.6" fill="#e6e6e6"/><rect x="84" y="184.5" width="8" height="0.7" fill="#ccc"/><rect x="83" y="186.0" width="10" height="0.6" fill="#e6e6e6"/><rect x="25" y="187.5" width="8" height="0.7" fill="#ccc"/><rect x="24" y="189.0" width="10" height="0.6" fill="#e6e6e6"/><rect x="95" y="197.5" width="4.5" height="2.2" rx="1" fill="#f6c42a"/></svg><div class="a" style="left:22.4px;top:209.89999999999998px;width:80.4px;height:46.5px;border:0.8px solid #dfe1e4;border-radius:5px;background:#fff"></div><svg style="left:0;top:0" width="118" height="283"><rect x="51" y="215.3" width="23" height="1.5" fill="#555" opacity="0.7"/><path d="M38.92 245.51 A11.5 11.5 0 0 1 41.10 222.93 L41.90 234.39 A0.01 0.01 0 0 0 41.90 234.41 Z" fill="#7b1428" stroke="#fff" stroke-width="0.5"/><path d="M42.27 223.91 A10.5 10.5 0 0 1 49.06 226.72 L41.91 234.39 A0.01 0.01 0 0 0 41.90 234.39 Z" fill="#b5ae45" stroke="#fff" stroke-width="0.5"/><path d="M49.45 227.11 A10.5 10.5 0 0 1 51.99 237.29 L41.91 234.40 A0.01 0.01 0 0 0 41.91 234.39 Z" fill="#f6b915" stroke="#fff" stroke-width="0.5"/><path d="M51.83 237.82 A10.5 10.5 0 0 1 39.72 244.67 L41.90 234.41 A0.01 0.01 0 0 0 41.91 234.40 Z" fill="#8f8f8f" stroke="#fff" stroke-width="0.5"/><circle cx="65.5" cy="224.0" r="2.2" fill="#7b1428"/><rect x="69.5" y="222.7" width="5" height="0.8" fill="#bbb"/><rect x="69.5" y="224.5" width="22" height="0.6" fill="#e4e4e4"/><circle cx="67.7" cy="231.3" r="2.2" fill="#b5ae45"/><rect x="71.7" y="230.0" width="5" height="0.8" fill="#bbb"/><rect x="71.7" y="231.8" width="22" height="0.6" fill="#e4e4e4"/><circle cx="67.7" cy="239.5" r="2.2" fill="#f6b915"/><rect x="71.7" y="238.2" width="5" height="0.8" fill="#bbb"/><rect x="71.7" y="240.0" width="22" height="0.6" fill="#e4e4e4"/><circle cx="65.5" cy="247.10000000000002" r="2.2" fill="#8f8f8f"/><rect x="69.5" y="245.8" width="5" height="0.8" fill="#bbb"/><rect x="69.5" y="247.60000000000002" width="22" height="0.6" fill="#e4e4e4"/><rect x="95" y="251.5" width="4.5" height="2.2" rx="1" fill="#f6c42a"/></svg><div class="a" style="left:22.4px;top:263.9px;width:80.4px;height:46.5px;border:0.8px solid #dfe1e4;border-radius:5px;background:#fff"></div><svg style="left:0;top:0" width="118" height="283"><rect x="51" y="268.7" width="23" height="1.5" fill="#555" opacity="0.7"/><rect x="52" y="275.0" width="6" height="0.8" fill="#bbb"/><rect x="65" y="275.0" width="6" height="0.8" fill="#bbb"/><rect x="48" y="277.0" width="13" height="0.6" fill="#e4e4e4"/><rect x="63" y="277.0" width="13" height="0.6" fill="#e4e4e4"/></svg></div><div class="a" style="left:108px;top:162.5px;width:5.6px;height:54.5px;border-radius:3px;background:#dadce0"></div><div class="t" style="left:11.75px;top:157.30px;font-size:8.0px;color:#3a3a3a;transform:scale(1.0112,1.0);-webkit-text-stroke:0.1px #3a3a3a;">6</div><div class="t" style="left:11.75px;top:211.00px;font-size:8.0px;color:#3a3a3a;transform:scale(1.0112,1.0);-webkit-text-stroke:0.1px #3a3a3a;">7</div><div class="t" style="left:11.75px;top:264.00px;font-size:8.0px;color:#3a3a3a;transform:scale(1.0112,1.0);-webkit-text-stroke:0.1px #3a3a3a;">8</div><div class="t" style="left:11.75px;top:317.80px;font-size:8.0px;color:#3a3a3a;transform:scale(1.0112,1.0);-webkit-text-stroke:0.1px #3a3a3a;">9</div><div class="t" style="left:7.90px;top:372.20px;font-size:8.0px;color:#3a3a3a;transform:scale(0.9664,1.0);-webkit-text-stroke:0.1px #3a3a3a;">10</div>
<div class="a" style="left:750px;top:156.6px;width:5.2px;height:210px;border-radius:3px;background:#dadce0"></div>
<div class="a" style="left:766.7px;top:190px;width:25px;height:23.5px;border-radius:12px;background:#edf0f4"></div>
<div class="a" style="left:766.7px;top:218px;width:25px;height:99px;border-radius:12px;background:#edf0f4"></div>
<svg style="left:0;top:0" width="800" height="450">
 <g stroke="#606368" stroke-width="0.9" fill="none">
  <path d="M777.5 198.3 H774 V206 H781.5 V202"/><path d="M779.8 197.5 V200.5 M778.3 199 H781.3" stroke-width="0.9"/>
  <path d="M776 204 H779.5" stroke-width="0.8"/>
  <rect x="773.5" y="229.5" width="8.6" height="6.5" rx="0.8"/><path d="M776.5 229.5 V236 M779 229.5 V236" stroke-width="0.8"/>
  <rect x="774.8" y="252.3" width="6.5" height="6.5" rx="0.8"/><path d="M773.5 254 V260.2 H779.5"/>
  <path d="M777.5 275.5 H773.8 V283.3 H781.6 V279.5"/><circle cx="779.6" cy="276.4" r="1.4"/><path d="M775.2 282 L777.2 280 L779 281.5"/>
  <path d="M773.5 299 H776.8 L777.8 300.3 H782 V306.4 H773.5 Z"/>
 </g>
</svg>
<div class="a" style="left:230px;top:392.5px;width:518px;height:25.5px;border-radius:6px;background:#eef1f6"></div><div class="a" style="left:776px;top:396px;width:24px;height:22px;border-radius:11px 0 0 11px;background:#fff;box-shadow:0 0 2px rgba(0,0,0,0.15)"></div><svg style="left:0;top:0" width="800" height="450">
 <circle cx="787.8" cy="403" r="3.6" fill="#c062c0"/>
 <circle cx="791.2" cy="403" r="3.6" fill="#7a5ae0" opacity="0.9"/>
 <path d="M789.5 399.6 V406.4" stroke="#f6e6ff" stroke-width="0.5"/>
 <path d="M795 411 L793.2 413 L795 415" stroke="#555" stroke-width="0.9" fill="none"/>
</svg><div class="t" style="left:628.40px;top:382.60px;font-size:12.0px;color:rgba(130,134,140,0.5);transform:scale(0.9715,1.0);">Activate Windows</div><div class="t" style="left:628.40px;top:396.82px;font-size:8.8px;color:rgba(130,134,140,0.5);transform:scale(0.9899,1.0);">Go to Settings to activate Windows.</div>
<div class="a" style="left:6px;top:394px;width:224px;height:25.5px;border-radius:5px;background:#3d424c"></div>
<div class="a" style="left:41.4px;top:399px;width:21.6px;height:16px;border-radius:4px;background:#4a89f3"></div>
<div class="a" style="left:68px;top:399px;width:21.5px;height:16px;border-radius:4px;background:#e06b6b"></div>
<div class="a" style="left:158.8px;top:399.8px;width:12.7px;height:14.5px;border-radius:3px;background:#2a2d33"></div>
<svg style="left:0;top:0" width="800" height="450">
 <rect x="49.2" y="403.2" width="2" height="7.6" fill="#fff"/><rect x="53.2" y="403.2" width="2" height="7.6" fill="#fff"/>
 <rect x="75.5" y="403.8" width="6.5" height="6.5" fill="#fff"/>
 <g stroke="#ececec" stroke-width="1.2" fill="none">
  <circle cx="103.6" cy="405.8" r="3.4"/><path d="M100.2 411.8 Q103.6 409 107 411.8"/><path d="M99 412 L108.5 401.8"/>
  <path d="M132.6 402 V406.5 M130 405.8 A2.6 2.6 0 0 0 135.2 405.8 M132.6 408.5 V411 M130.8 411.2 H134.4 M128.3 412 L137 402" />
  <path d="M222.5 403.8 L220 407 L222.5 410.2" stroke="#9aa0a8"/>
 </g>
 <path d="M161.8 402.3 L168.5 408 L165.2 408.4 L167.3 411.8 L166 412.5 L164 409 L161.8 411.2 Z" fill="#f3f3f3"/>
 <path d="M181.2 411.8 L181.8 409.3 L187.2 403.9 L189.1 405.8 L183.7 411.2 Z" fill="#f0f0f0"/>
 <path d="M203.2 401.3 V405.5" stroke="#ececec" stroke-width="1.1"/>
 <path d="M200 405.5 H206.4 V407.5 L207.5 412.5 H198.9 L200 407.5 Z" fill="#ececec"/>
 <path d="M201.5 412.3 V409.8 M203.2 412.3 V409.3 M204.9 412.3 V409.8" stroke="#3d424c" stroke-width="0.5"/>
 <circle cx="116.3" cy="407" r="0.9" fill="#aab"/><circle cx="143.8" cy="407" r="0.9" fill="#aab"/>
 <path d="M153 400.5 V413.5" stroke="#5a606a" stroke-width="0.8"/>
</svg>
<div class="t" style="left:15.60px;top:402.75px;font-size:9.0px;color:#ffffff;font-weight:bold;transform:scale(0.9826,1.0);">0:00</div>
<div class="a" style="left:246px;top:392.4px;width:307.5px;height:30.6px;background:#fff;border:0.7px solid #e3e3e3;box-shadow:0 1px 2px rgba(0,0,0,0.12)"></div>
<div class="a" style="left:464.8px;top:396.5px;width:62.7px;height:21.5px;border-radius:11px;background:#0b57d0"></div>
<svg style="left:0;top:0" width="800" height="450">
 <path d="M252.6 403.6 V410.2 M255.4 403.6 V410.2" stroke="#c4c4c4" stroke-width="0.9"/>
 <path d="M533 411 H547.5" stroke="#0b57d0" stroke-width="0.6"/>
</svg>
<div class="t" style="left:262.70px;top:403.19px;font-size:7.9px;color:#333;transform:scale(0.8562,1.0);">Awesome Screen Recorder &amp; Screenshot is sharing your screen.</div><div class="t" style="left:474.05px;top:403.12px;font-size:8.8px;color:#ffffff;font-weight:bold;transform:scale(0.8088,1.0);">Stop sharing</div><div class="t" style="left:533.00px;top:403.54px;font-size:7.6px;color:#0b57d0;transform:scale(0.9276,1.0);">Hide</div>
<div class="a" style="left:0;top:427px;width:800px;height:23px;background:#272624"></div>
<div class="a" style="left:28px;top:426.3px;width:168px;height:23.7px;background:#f0f0f0;border:0.6px solid #d0d0d0"></div>
<div class="a" style="left:370.6px;top:427px;width:26.5px;height:23px;background:#3a3b3e"></div>
<svg style="left:0;top:0" width="800" height="450">
 <g fill="#fff"><path d="M9.8 433.3 L13.9 432.7 V437.6 H9.8 Z M14.6 432.6 L19.5 431.9 V437.6 H14.6 Z M9.8 438.3 H13.9 V443.2 L9.8 442.6 Z M14.6 438.3 H19.5 V444 L14.6 443.3 Z"/></g>
 <circle cx="41.5" cy="437" r="3.3" stroke="#333" stroke-width="1.1" fill="none"/><path d="M39.3 439.3 L36.3 442.3" stroke="#333" stroke-width="1.2"/>
 <!-- decoration -->
 <circle cx="165" cy="434.8" r="5.3" fill="none" stroke="#c4c4c8" stroke-width="1.6"/>
 <circle cx="165" cy="434.8" r="3.3" fill="none" stroke="#4a2a3a" stroke-width="1.3" stroke-dasharray="1.3 0.9"/>
 <path d="M168.5 440 Q175 437 182.5 441.5 L179.5 447.5 Q174 443.5 170 446 Z" fill="#2a2450"/>
 <path d="M171 441 L173 445 M175 439.5 L176.5 444.5 M179 440.5 L179 445" stroke="#6a4ad0" stroke-width="0.7"/>
 <circle cx="157.5" cy="442.8" r="3.2" fill="#e88a98"/><circle cx="157.5" cy="442.8" r="1.8" fill="#d05a78"/>
 <circle cx="176" cy="431" r="2.2" fill="#e58a96"/>
 <path d="M187 429.5 L188.2 433.3 L192 432 L189.3 435 L192.5 437.5 L188.5 437.3 L187.5 441 L186.3 437.3 L182.3 437.8 L185 435 L182 432.3 L185.8 433.3 Z" fill="#f2c23a"/>
 <!-- task view -->
 <g stroke="#ddd" stroke-width="0.9" fill="none"><rect x="206.7" y="434.5" width="6" height="6.5"/><path d="M205 432.5 H214.3 M205 443 H214.3 M216 433 V434 M216 436.5 V439 M216 441.5 V442.5"/></g>
 <!-- explorer -->
 <path d="M233.8 434 H239 L240.3 435.3 H247 V443.5 H233.8 Z" fill="#f5c342"/><rect x="233.8" y="437.3" width="13.2" height="6.2" fill="#ffd866"/><rect x="237" y="438.5" width="6.5" height="3.2" fill="#3c8fe0"/>
 <!-- video -->
 <rect x="263" y="432" width="13" height="11.5" fill="#1b5fc4" transform="skewX(-8) translate(61 0)"/><path d="M267 434.7 L273.5 438 L267 441.3 Z" fill="#cfe4ff"/>
 <!-- app 3 -->
 <path d="M291.5 443.5 L295 431.5 L304 433 L300.5 445 Z" fill="#5aa9e6"/><path d="M293.5 441 L296.5 433 L302 434 L299 442 Z" fill="#bde2f7"/>
 <!-- chromes -->
 <circle cx="327" cy="437.5" r="6.2" fill="#db4437"/><path d="M327 437.5 L321.63 440.6 A6.2 6.2 0 0 0 332.37 440.6 Z" fill="#0f9d58"/><path d="M327 437.5 L332.37 440.6 A6.2 6.2 0 0 0 327 431.3 Z" fill="#f4b400"/><circle cx="327" cy="437.5" r="2.9" fill="#fff"/><circle cx="327" cy="437.5" r="2.2" fill="#4285f4"/><circle cx="330.6" cy="441.6" r="3.6" fill="#6a3fc1"/><circle cx="355" cy="437.5" r="6.2" fill="#db4437"/><path d="M355 437.5 L349.63 440.6 A6.2 6.2 0 0 0 360.37 440.6 Z" fill="#0f9d58"/><path d="M355 437.5 L360.37 440.6 A6.2 6.2 0 0 0 355 431.3 Z" fill="#f4b400"/><circle cx="355" cy="437.5" r="2.9" fill="#fff"/><circle cx="355" cy="437.5" r="2.2" fill="#4285f4"/><circle cx="358.6" cy="441.6" r="3.6" fill="#f09b7a"/><circle cx="383.5" cy="437.5" r="6.2" fill="#db4437"/><path d="M383.5 437.5 L378.13 440.6 A6.2 6.2 0 0 0 388.87 440.6 Z" fill="#0f9d58"/><path d="M383.5 437.5 L388.87 440.6 A6.2 6.2 0 0 0 383.5 431.3 Z" fill="#f4b400"/><circle cx="383.5" cy="437.5" r="2.9" fill="#fff"/><circle cx="383.5" cy="437.5" r="2.2" fill="#4285f4"/><circle cx="387.1" cy="441.6" r="3.6" fill="#162038"/>
 <g fill="#86a8d8"><rect x="229" y="448.6" width="23" height="1.4"/><rect x="258" y="448.6" width="24" height="1.4"/><rect x="286" y="448.6" width="23" height="1.4"/><rect x="315" y="448.6" width="24" height="1.4"/><rect x="343" y="448.6" width="24" height="1.4"/><rect x="371" y="448.6" width="26" height="1.4"/></g>
 <!-- weather -->
 <circle cx="612" cy="438.5" r="5.2" fill="#e8732a"/><circle cx="612" cy="439.5" r="3.5" fill="#f5b53a"/><circle cx="616.2" cy="433.3" r="2.6" fill="#d22"/>
 <g stroke="#e8e8e8" stroke-width="1" fill="none">
  <path d="M678.8 440 L682 436.8 L685.2 440"/>
  <rect x="693" y="434" width="5.2" height="6.5" rx="1"/><path d="M692.3 436 V438.5 M698.9 436 V438.5"/>
  <rect x="706" y="433.5" width="8.5" height="6" /><path d="M710 439.5 V442 M707.5 442 H712.5"/>
  <path d="M719.5 436 H721.5 L724 433.5 V442 L721.5 439.5 H719.5 Z M726 435.5 A3.5 3.5 0 0 1 726 440 M728 434 A5.5 5.5 0 0 1 728 441.5"/>
  <path d="M776.5 433 H787 V440.5 H781.5 L778.5 443 V440.5 H776.5 Z"/>
 </g>
 <circle cx="786.5" cy="441.5" r="3.6" fill="#272624" stroke="#e8e8e8" stroke-width="0.8"/>
</svg>
<div class="t" style="left:51.50px;top:432.62px;font-size:10.8px;color:#222;transform:scale(0.8538,1.0);">Type here to search</div><div class="t" style="left:624.00px;top:433.41px;font-size:9.4px;color:#f0f0f0;transform:scale(0.8470,1.0);">34°C  Haze</div><div class="t" style="left:737.05px;top:428.54px;font-size:7.6px;color:#f0f0f0;transform:scale(0.9363,1.0);">3:37 PM</div><div class="t" style="left:734.05px;top:439.94px;font-size:7.6px;color:#f0f0f0;transform:scale(0.9612,1.0);">8/27/2025</div><div class="t" style="left:785.00px;top:439.41px;font-size:5.4px;color:#f0f0f0;">2</div></body></html>
